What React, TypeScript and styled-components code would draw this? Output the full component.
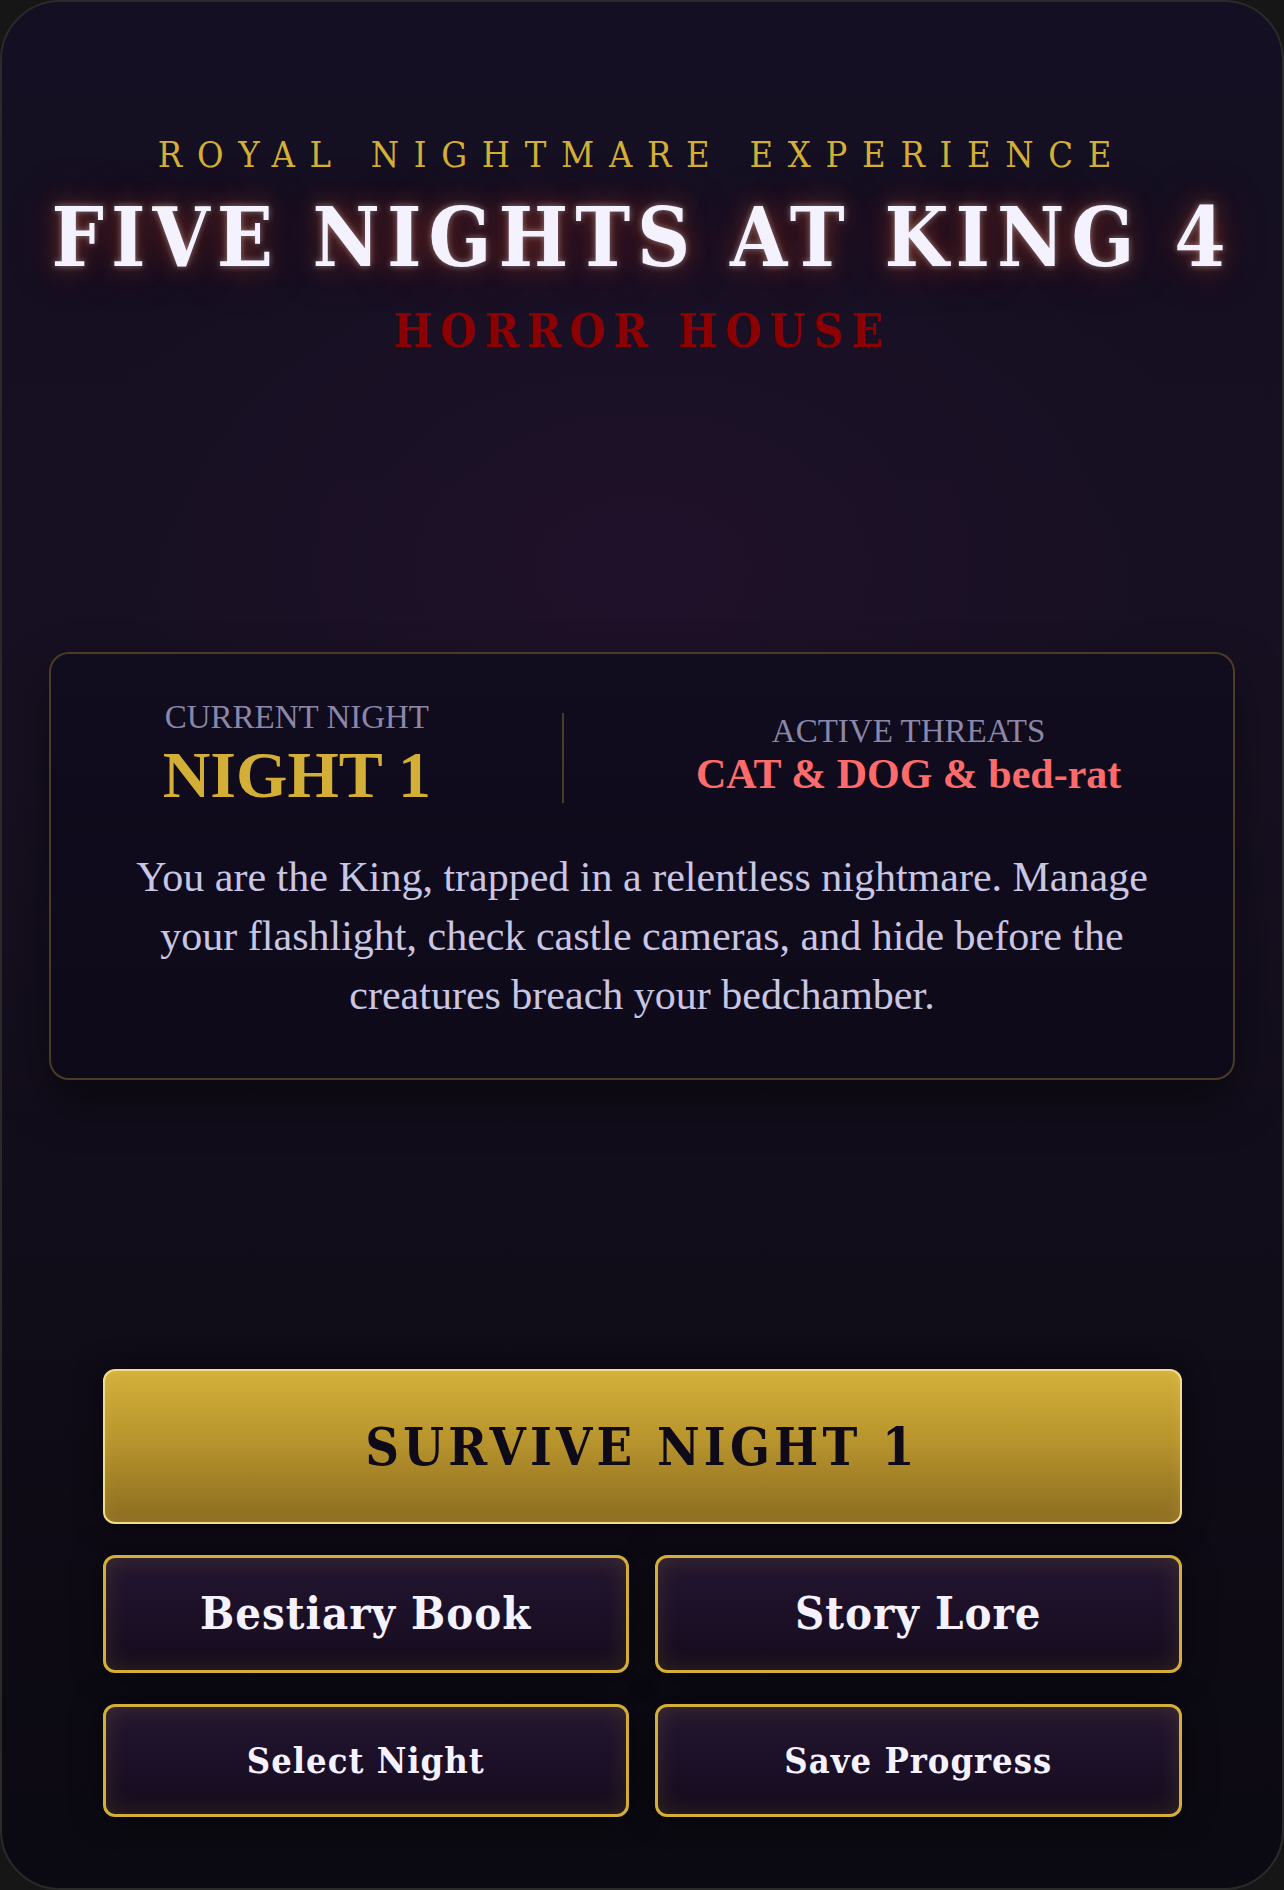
import * as React from 'react'
import styled, { createGlobalStyle } from 'styled-components'

const COLOR = {
  GOLD: '#d4af37',
  GOLD_DIM: 'rgba(212, 175, 55, 0.3)',
  BLOOD: '#8b0000',
  DANGER: '#ff6b6b',
  GHOST: '#f5f2ff',
  MUTED: '#8a87a8',
  BODY: '#c9c6e3',
  INK: '#0f0a17',
}

const SERIF_DISPLAY = `'DejaVu Serif Condensed', 'DejaVu Serif', serif`
const SERIF_TEXT = `'Liberation Serif', 'Times New Roman', serif`

const GlobalStyle = createGlobalStyle`
  html, body {
    margin: 0;
    padding: 0;
    background: #161616;
  }
  * {
    box-sizing: border-box;
  }
`

interface Threat {
  night: number
  threats: string
}

const current: Threat = { night: 1, threats: 'CAT & DOG & bed-rat' }

const App = () => {
  return (
    <>
      <GlobalStyle />
      <Frame>
        <Header>
          <Kicker>ROYAL NIGHTMARE EXPERIENCE</Kicker>
          <Title>FIVE NIGHTS AT KING 4</Title>
          <Subtitle>HORROR HOUSE</Subtitle>
        </Header>

        <Card>
          <Stats>
            <Stat>
              <StatLabel>CURRENT NIGHT</StatLabel>
              <StatValue tone={'gold'}>NIGHT {current.night}</StatValue>
            </Stat>
            <Divider />
            <Stat>
              <StatLabel>ACTIVE THREATS</StatLabel>
              <StatValue tone={'danger'}>{current.threats}</StatValue>
            </Stat>
          </Stats>
          <Blurb>
            You are the King, trapped in a relentless nightmare. Manage your
            flashlight, check castle cameras, and hide before the creatures
            breach your bedchamber.
          </Blurb>
        </Card>

        <Actions>
          <PrimaryButton>SURVIVE NIGHT {current.night}</PrimaryButton>
          <GhostButton size={'lg'}>Bestiary Book</GhostButton>
          <GhostButton size={'lg'}>Story Lore</GhostButton>
          <GhostButton size={'md'}>Select Night</GhostButton>
          <GhostButton size={'md'}>Save Progress</GhostButton>
        </Actions>
      </Frame>
    </>
  )
}

const Frame = styled.main`
  height: 100vh;
  min-height: 1890px;
  border: 2px solid #2a2a2a;
  border-radius: 60px;
  overflow: hidden;
  display: flex;
  flex-direction: column;
  justify-content: space-between;
  padding: 132px 47px 71px;
  background:
    radial-gradient(ellipse 60% 30% at 50% 30%, rgba(48, 20, 56, 0.35), transparent 75%),
    linear-gradient(180deg, #140f22 0%, #171021 40%, #100c18 70%, #0b0911 100%);
`

const Header = styled.header`
  display: flex;
  flex-direction: column;
  align-items: center;
  text-align: center;
  white-space: nowrap;
  font-stretch: condensed;
`

const Kicker = styled.div`
  font-family: ${SERIF_DISPLAY};
  font-size: 36px;
  letter-spacing: 14.7px;
  color: ${COLOR.GOLD};
`

const Title = styled.h1`
  margin: 14px 0 0;
  font-family: ${SERIF_DISPLAY};
  font-size: 82px;
  font-weight: 700;
  line-height: normal;
  letter-spacing: 7px;
  color: ${COLOR.GHOST};
  text-shadow:
    0 0 6px rgba(255, 255, 255, 0.4),
    0 0 22px rgba(160, 70, 40, 0.6),
    0 0 50px rgba(139, 0, 0, 0.45);
`

const Subtitle = styled.div`
  margin-top: 19px;
  font-family: ${SERIF_DISPLAY};
  font-size: 46px;
  font-weight: 700;
  letter-spacing: 8px;
  color: ${COLOR.BLOOD};
`

const Card = styled.section`
  margin-top: 5px;
  border: 2px solid ${COLOR.GOLD_DIM};
  border-radius: 20px;
  padding: 45px 46px 54px;
  background: linear-gradient(180deg, #110c1e 0%, #0f0a19 100%);
  box-shadow: 0 22px 50px rgba(0, 0, 0, 0.45);
`

const Stats = styled.div`
  display: flex;
  justify-content: space-around;
  align-items: center;
  margin-bottom: 36px;
`

const Stat = styled.div`
  text-align: center;
  font-family: ${SERIF_TEXT};
  white-space: nowrap;
`

const StatLabel = styled.div`
  font-size: 33px;
  line-height: 1.15;
  color: ${COLOR.MUTED};
`

const StatValue = styled.div<{ tone: 'gold' | 'danger' }>`
  font-weight: 700;
  line-height: 1.1;
  font-size: ${props => (props.tone === 'gold' ? 66 : 42)}px;
  color: ${props => (props.tone === 'gold' ? COLOR.GOLD : COLOR.DANGER)};
  margin-top: ${props => (props.tone === 'gold' ? 3 : 0)}px;
`

const Divider = styled.div`
  width: 2px;
  height: 90px;
  margin-top: 6px;
  background: ${COLOR.GOLD_DIM};
`

const Blurb = styled.p`
  margin: 0;
  text-align: center;
  font-family: ${SERIF_TEXT};
  font-size: 42px;
  line-height: 1.4;
  color: ${COLOR.BODY};
`

const Actions = styled.nav`
  width: 100%;
  max-width: 1079px;
  margin: 0 auto;
  display: grid;
  grid-template-columns: 1fr 1fr;
  column-gap: 26px;
  row-gap: 31px;
`

const PrimaryButton = styled.button`
  grid-column: 1 / -1;
  height: 155px;
  border: 2px solid #f3dc8a;
  border-radius: 12px;
  background: linear-gradient(180deg, #d4b03a 0%, #b8952d 45%, #8c6d20 100%);
  box-shadow: inset 0 0 14px rgba(255, 240, 180, 0.12), 0 0 30px rgba(0, 0, 0, 0.45);
  font-family: ${SERIF_DISPLAY};
  font-stretch: condensed;
  font-size: 52px;
  font-weight: 700;
  letter-spacing: 4.2px;
  color: ${COLOR.INK};
  cursor: pointer;
`

const GhostButton = styled.button<{ size: 'lg' | 'md' }>`
  height: ${props => (props.size === 'lg' ? 118 : 113)}px;
  border: 3px solid ${COLOR.GOLD};
  border-radius: 12px;
  background: linear-gradient(180deg, #241630 0%, #1c1028 50%, #150c1d 100%);
  box-shadow: inset 0 0 22px rgba(212, 175, 55, 0.16), 0 0 30px rgba(0, 0, 0, 0.5);
  font-family: ${SERIF_DISPLAY};
  font-stretch: condensed;
  font-size: ${props => (props.size === 'lg' ? 45 : 36)}px;
  font-weight: 700;
  letter-spacing: 1px;
  color: ${COLOR.GHOST};
  cursor: pointer;
`

export default App
